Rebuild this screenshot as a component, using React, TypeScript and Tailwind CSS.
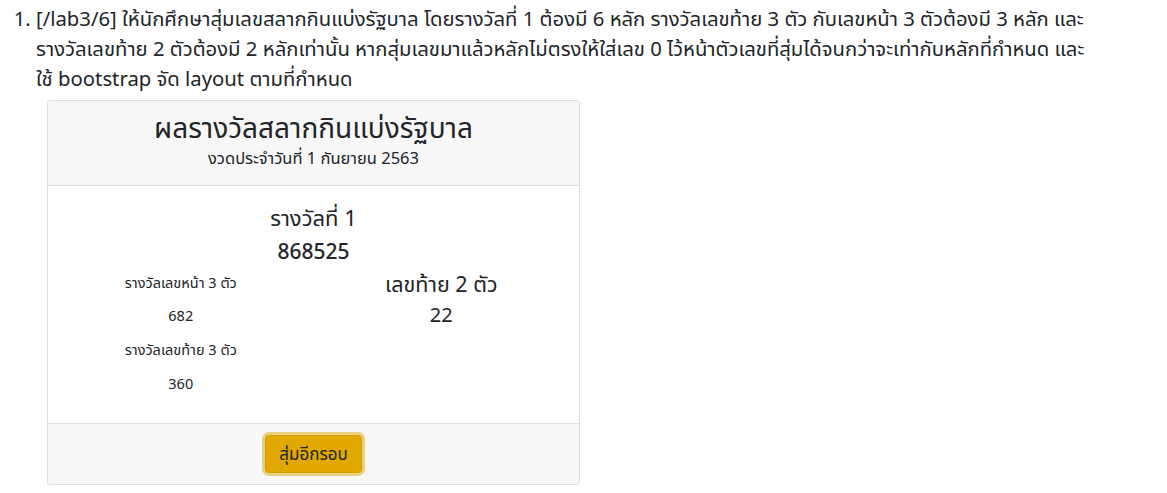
import React from 'react';

const font = { fontFamily: '"Noto Sans", "Noto Sans Thai", sans-serif' };

function PrizeCard() {
  return (
    <div className="ml-[11px] mt-[7px] w-[533px] border border-[#dfdfdf] rounded-[3px] bg-white text-[#212529]">
      {/* header */}
      <div className="h-[85px] bg-[#f7f7f7] border-b border-[#dfdfdf] flex flex-col items-center pt-[7px]">
        <div className="text-[28px] leading-[38px]">ผลรางวัลสลากกินแบ่งรัฐบาล</div>
        <div className="text-[16.5px] leading-[24px]">งวดประจำวันที่ 1 กันยายน 2563</div>
      </div>

      {/* body */}
      <div className="h-[237px] pt-[16px] flex flex-col">
        <div className="text-center text-[22px] leading-[30px]">รางวัลที่ 1</div>
        <div className="text-center text-[21px] leading-[34px] font-medium mt-[2px]">868525</div>
        <div className="grid grid-cols-2 -mt-[2px]">
          <div className="flex flex-col items-center text-[14.5px]">
            <div className="leading-[33px]">รางวัลเลขหน้า 3 ตัว</div>
            <div className="leading-[33px]">682</div>
            <div className="leading-[34px]">รางวัลเลขท้าย 3 ตัว</div>
            <div className="leading-[34px]">360</div>
          </div>
          <div className="flex flex-col items-center pt-[3px] pr-[10px]">
            <div className="text-[21.5px] leading-[30px]">เลขท้าย 2 ตัว</div>
            <div className="text-[20px] leading-[32px]">22</div>
          </div>
        </div>
      </div>

      {/* footer */}
      <div className="h-[61px] bg-[#f7f7f7] border-t border-[#dfdfdf] flex items-center justify-center">
        <button className="h-[38px] px-[13px] rounded-[4px] bg-[#e0a800] border border-[#d39e00] text-[17px] text-[#212529] shadow-[0_0_0_3px_rgba(222,170,12,0.5)]">
          สุ่มอีกรอบ
        </button>
      </div>
    </div>
  );
}

export default function App() {
  return (
    <div className="min-h-[493px] bg-white text-[#212529]" style={font}>
      <ol className="list-decimal pl-[36px] pt-[3px] text-[20.3px] leading-[30px]">
        <li>
          [/lab3/6] ให้นักศึกษาสุ่มเลขสลากกินแบ่งรัฐบาล โดยรางวัลที่ 1 ต้องมี 6 หลัก รางวัลเลขท้าย 3 ตัว กับเลขหน้า 3 ตัวต้องมี 3 หลัก และ
          <br />
          รางวัลเลขท้าย 2 ตัวต้องมี 2 หลักเท่านั้น หากสุ่มเลขมาแล้วหลักไม่ตรงให้ใส่เลข 0 ไว้หน้าตัวเลขที่สุ่มได้จนกว่าจะเท่ากับหลักที่กำหนด และ
          <br />
          ใช้ bootstrap จัด layout ตามที่กำหนด
          <PrizeCard />
        </li>
      </ol>
    </div>
  );
}
